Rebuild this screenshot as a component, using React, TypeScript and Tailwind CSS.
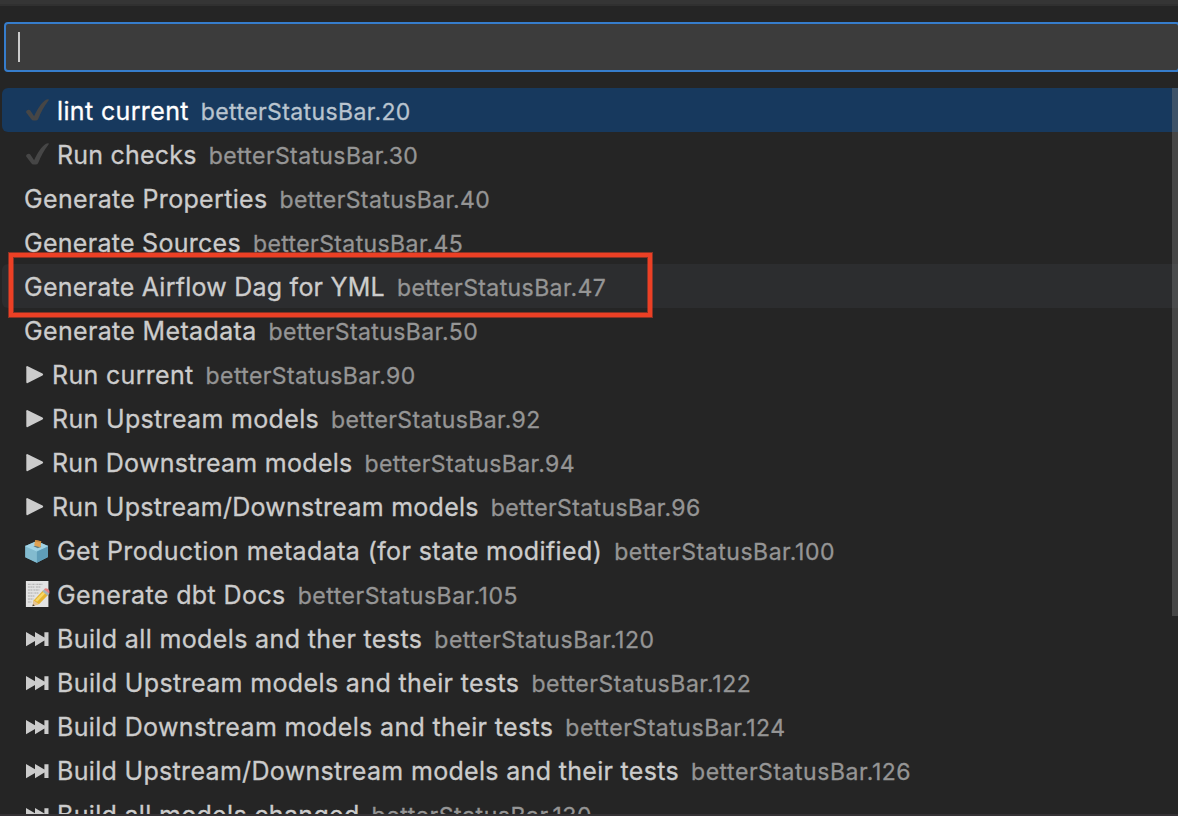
import React from "react";

type IconName = "check" | "play" | "ballot" | "memo" | "next";

interface Command {
  icon?: IconName;
  label: string;
  description: string;
  tracking: string;
  state?: "selected" | "hovered";
}

const commands: Command[] = [
  { icon: "check", label: "lint current", description: "betterStatusBar.20", tracking: "tracking-[0.36px]", state: "selected" },
  { icon: "check", label: "Run checks", description: "betterStatusBar.30", tracking: "tracking-[0.22px]" },
  { label: "Generate Properties", description: "betterStatusBar.40", tracking: "tracking-[0.33px]" },
  { label: "Generate Sources", description: "betterStatusBar.45", tracking: "tracking-[0.28px]" },
  { label: "Generate Airflow Dag for YML", description: "betterStatusBar.47", tracking: "tracking-[0.24px]", state: "hovered" },
  { label: "Generate Metadata", description: "betterStatusBar.50", tracking: "tracking-[0.34px]" },
  { icon: "play", label: "Run current", description: "betterStatusBar.90", tracking: "tracking-[0.32px]" },
  { icon: "play", label: "Run Upstream models", description: "betterStatusBar.92", tracking: "tracking-[0.33px]" },
  { icon: "play", label: "Run Downstream models", description: "betterStatusBar.94", tracking: "tracking-[0.28px]" },
  { icon: "play", label: "Run Upstream/Downstream models", description: "betterStatusBar.96", tracking: "tracking-[0.27px]" },
  { icon: "ballot", label: "Get Production metadata (for state modified)", description: "betterStatusBar.100", tracking: "tracking-[0.39px]" },
  { icon: "memo", label: "Generate dbt Docs", description: "betterStatusBar.105", tracking: "tracking-[0.4px]" },
  { icon: "next", label: "Build all models and ther tests", description: "betterStatusBar.120", tracking: "tracking-[0.37px]" },
  { icon: "next", label: "Build Upstream models and their tests", description: "betterStatusBar.122", tracking: "tracking-[0.37px]" },
  { icon: "next", label: "Build Downstream models and their tests", description: "betterStatusBar.124", tracking: "tracking-[0.35px]" },
  { icon: "next", label: "Build Upstream/Downstream models and their tests", description: "betterStatusBar.126", tracking: "tracking-[0.32px]" },
  { icon: "next", label: "Build all models changed", description: "betterStatusBar.130", tracking: "tracking-[0.32px]" },
];

function CommandIcon({ name }: { name: IconName }) {
  if (name === "play") {
    return (
      <svg viewBox="-0.5 0 28 44" className="h-11 w-7 shrink-0" fill="#cccccc">
        <path d="M1.8 15.2Q1.8 13.6 3.2 14.2L18 21.6Q19.4 22.6 18 23.4L3.2 31Q1.8 31.7 1.8 30.1Z" />
      </svg>
    );
  }
  return (
    <svg viewBox="-0.4 0 33 44" className="h-11 w-[33px] shrink-0">
      {name === "check" && (
        <path
          d="M1.8 24.5C1 22.7 4.7 20.8 5.9 22.5L9.7 28.2C12.7 21.5 17.1 14.5 21.6 11.8C22.7 11 25.1 11 24.3 12.2C19.7 18 16.5 24.2 13.8 31Q13.2 32.6 11.1 32.6H9.3Q7.7 32.6 6.9 31.2Z"
          fill="#464646"
        />
      )}
      {name === "ballot" && (
        <>
          <path d="M.9 18L12.4 13L23.6 18V29L12.4 34.8L.9 29.2Z" fill="#6eafc9" />
          <path d="M.9 18L12.4 13L23.6 18L12.4 23Z" fill="#a2d2e3" />
          <path d="M12.4 23L23.6 18V29L12.4 34.8Z" fill="#5f9db8" />
          <path d="M.9 18L12.4 23V34.8L.9 29.2Z" fill="#83bbcf" />
          <path d="M1.1 18L12.4 23L23.4 18" fill="none" stroke="#a5dbec" strokeWidth=".8" />
          <path d="M9 18.2L13 17L17 18.8L13.4 20.3Z" fill="#5f7c80" />
          <path d="M10.8 12L16.8 13.2L16.2 19.6L9.8 17.4Z" fill="#dfa050" />
          <path d="M10.8 12L16.8 13.2L16.6 14.6L10.5 13.5Z" fill="#c98a40" />
        </>
      )}
      {name === "memo" && (
        <>
          <path d="M1.5 9H24V35H1.5Z" fill="#e3e3e3" />
          <path
            d="M3.5 12.3H7M8 12.3H11M12 12.3H18M3.5 15H10M11.5 15H16M3.5 18H8M9 18H15M3.5 21H9M10 21H14M3.5 24H10M3.5 27H9M3.5 30H7"
            fill="none"
            stroke="#9c9c9c"
            strokeWidth=".8"
            strokeDasharray="2 .5"
          />
          <path d="M9.2 28.4L18.6 18.4L23.8 22.8L14.8 32L8.3 33.9Z" fill="#e6b431" />
          <path d="M10.8 28.3L19.8 19L21.6 20.5L12.8 29.8Z" fill="#f7d868" />
          <path d="M17.9 19.3L19.8 17.2L25 21.6L23.1 23.7Z" fill="#a6b5ba" />
          <path d="M19.6 17.4Q21 15.6 23.2 16.8Q25.8 18.4 24.8 21.6Z" fill="#e8817f" />
          <path d="M9.3 28.4L14.4 32.1L8 34.2Z" fill="#e6c495" />
          <path d="M8.6 32.3L10.4 33.4L8 34.2Z" fill="#39352c" />
        </>
      )}
      {name === "next" && (
        <path d="M1.6 16L10.6 21.2V16L20 21.6V16.2H24.1V30H20V24.6L10.6 30.2V25L1.6 30.2Z" fill="#cccccc" />
      )}
    </svg>
  );
}

function CommandRow({ command }: { command: Command }) {
  const selected = command.state === "selected";
  const background = selected ? "bg-[#17395e]" : command.state === "hovered" ? "bg-[#2c2d2f]" : "";
  const descriptionTracking = /\.\d{3}$/.test(command.description) ? "tracking-[0.54px]" : "tracking-[0.4px]";
  return (
    <li className={`ml-0.5 flex h-11 shrink-0 items-center rounded-l-md pl-[22px] whitespace-nowrap ${background}`}>
      {command.icon && <CommandIcon name={command.icon} />}
      <span className={`pt-0.5 text-[25px] leading-[42px] [-webkit-text-stroke:0.3px] ${command.tracking} ${selected ? "text-white" : "text-[#cccccc]"}`}>
        {command.label}
      </span>
      <span className={`ml-3 pt-1 text-[23px] leading-[40px] [-webkit-text-stroke:0.3px] ${descriptionTracking} ${selected ? "text-[#b9c4cf]" : "text-[#959595]"}`}>
        {command.description}
      </span>
    </li>
  );
}

export default function App() {
  return (
    <main className="relative flex h-[816px] w-[1178px] flex-col overflow-hidden bg-[#252525] font-['Inter',sans-serif]">
      <div className="h-1.5 shrink-0 border-b-2 border-[#303030] bg-[#353535]" />
      <div className="mt-4 -mr-0.5 ml-1 flex h-[50px] shrink-0 items-center rounded-[4px] border-2 border-[#367dcc] bg-[#3c3c3c] pl-3">
        <div className="h-[30px] w-0.5 bg-[#cccccc]" />
      </div>
      <ul className="mt-4 flex min-h-0 flex-1 flex-col overflow-hidden">
        {commands.map((command) => (
          <CommandRow key={command.description} command={command} />
        ))}
      </ul>
      <div className="h-0.5 shrink-0 bg-[#343134]" />
      <div className="absolute top-[88px] right-0 h-[528px] w-1.5 bg-[#797979]/40" />
      <div className="absolute top-[253px] left-[9px] h-[64px] w-[643px] border-4 border-[#ec4025] shadow-[0_0_0_1px_#ec402580,inset_0_0_0_1px_#ec402580]" />
    </main>
  );
}
